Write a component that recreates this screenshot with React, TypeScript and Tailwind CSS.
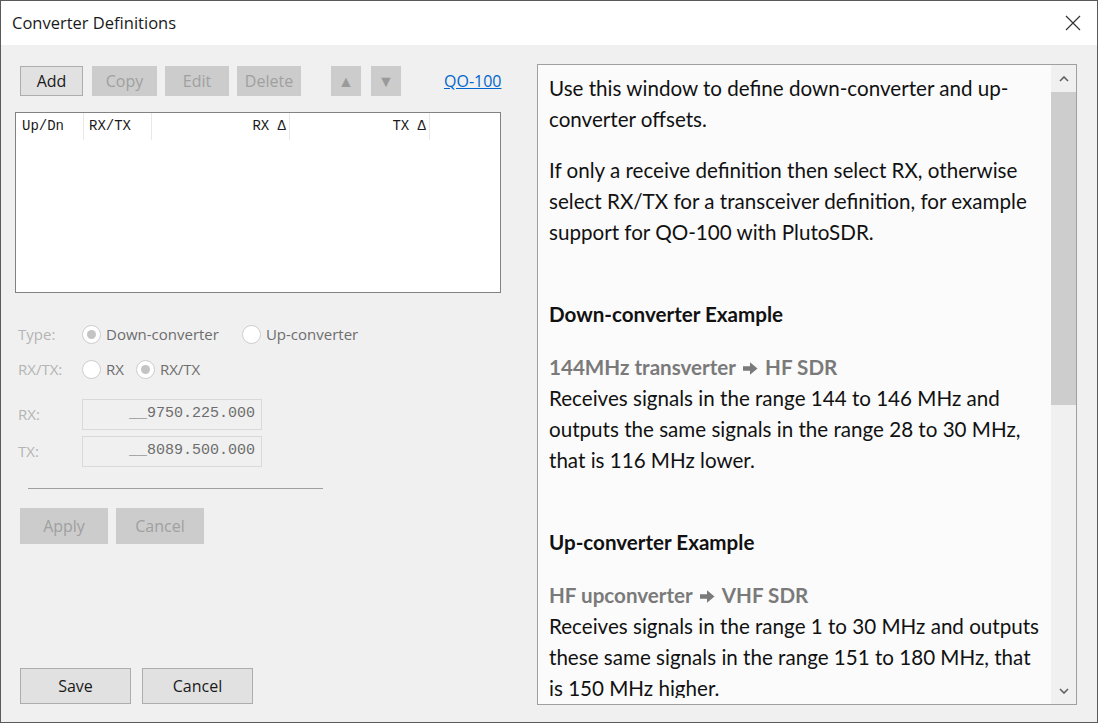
import React from 'react';

const ui = { fontFamily: '"Open Sans", "Noto Sans", sans-serif' };
const mono = { fontFamily: '"Liberation Mono", "DejaVu Sans Mono", monospace' };
const doc = { fontFamily: 'Lato, "Open Sans", sans-serif' };

function Btn({ label, w, disabled = false, h = 30 }: { label: string; w: number; disabled?: boolean; h?: number }) {
  return (
    <button
      className={
        disabled
          ? 'flex items-center justify-center bg-[#cccccc] text-[#a0a0a0] border border-[#cccccc] text-[16px]'
          : 'flex items-center justify-center bg-[#e1e1e1] text-[#1a1a1a] border border-[#adadad] text-[16px]'
      }
      style={{ width: w, height: h }}
    >
      {label}
    </button>
  );
}

function Radio({ checked, label }: { checked?: boolean; label: string }) {
  return (
    <div className="flex items-center">
      <span className="w-[19px] h-[19px] rounded-full border border-[#cdcdcd] bg-white flex items-center justify-center">
        {checked && <span className="w-[9px] h-[9px] rounded-full bg-[#c4c4c4]" />}
      </span>
      <span className="ml-[5px] text-[15px] text-[#6d6d6d]">{label}</span>
    </div>
  );
}

function Arrow() {
  return (
    <svg width="15" height="13" viewBox="0 0 15 13" className="inline-block mx-[7px] -mt-[3px]">
      <path d="M0 4.3h7V0.3L14.5 6.5L7 12.7V8.7H0z" fill="#7a7a7a" />
    </svg>
  );
}

export default function App() {
  return (
    <div className="w-[1098px] h-[723px] border border-[#5a5a5a] bg-[#f0f0f0] flex flex-col overflow-hidden" style={ui}>
      {/* title bar */}
      <div className="h-[44px] bg-white flex items-center justify-between pl-[11px] pr-[16px] shrink-0">
        <span className="text-[16.5px] text-[#1a1a1a]">Converter Definitions</span>
        <svg width="16" height="16" viewBox="0 0 16 16">
          <path d="M1 1L15 15M15 1L1 15" stroke="#333" strokeWidth="1.2" />
        </svg>
      </div>

      <div className="flex flex-1 min-h-0">
        {/* left column */}
        <div className="w-[536px] pl-[14px] pt-[21px] pb-[18px] flex flex-col">
          <div className="flex items-center ml-[5px] h-[30px]">
            <Btn label="Add" w={63} />
            <div className="w-[9px]" />
            <Btn label="Copy" w={65} disabled />
            <div className="w-[8px]" />
            <Btn label="Edit" w={64} disabled />
            <div className="w-[8px]" />
            <Btn label="Delete" w={64} disabled />
            <div className="w-[30px]" />
            <button className="w-[30px] h-[30px] bg-[#cccccc] text-[#9a9a9a] text-[16px] flex items-center justify-center">▲</button>
            <div className="w-[10px]" />
            <button className="w-[30px] h-[30px] bg-[#cccccc] text-[#9a9a9a] text-[16px] flex items-center justify-center">▼</button>
            <a className="ml-[43px] text-[16px] text-[#0066cc] underline">QO-100</a>
          </div>

          {/* list of converters */}
          <div className="mt-[16px] w-[486px] h-[181px] border border-[#828282] bg-white">
            <div className="flex h-[27px] text-[14px] text-[#1a1a1a]" style={mono}>
              <div className="w-[68px] border-r border-[#e8e8e8] pl-[6px] flex items-center">Up/Dn</div>
              <div className="w-[68px] border-r border-[#e8e8e8] pl-[5px] flex items-center">RX/TX</div>
              <div className="w-[138px] border-r border-[#e8e8e8] pr-[3px] flex items-center justify-end">RX Δ</div>
              <div className="w-[140px] border-r border-[#e8e8e8] pr-[3px] flex items-center justify-end">TX Δ</div>
            </div>
          </div>

          {/* editor */}
          <div className="ml-[3px] mt-[30px] flex flex-col">
            <div className="flex items-center h-[22px]">
              <span className="w-[64px] text-[15px] text-[#b4b4b4]">Type:</span>
              <Radio checked label="Down-converter" />
              <div className="w-[23px]" />
              <Radio label="Up-converter" />
            </div>
            <div className="flex items-center h-[22px] mt-[13px]">
              <span className="w-[64px] text-[15px] text-[#b4b4b4]">RX/TX:</span>
              <Radio label="RX" />
              <div className="w-[12px]" />
              <Radio checked label="RX/TX" />
            </div>
            <div className="flex items-center mt-[19px]">
              <span className="w-[64px] text-[15px] text-[#b4b4b4]">RX:</span>
              <div className="w-[180px] h-[31px] border border-[#d9d9d9] flex items-center justify-end pr-[6px] text-[15px] text-[#6d6d6d]" style={mono}>
                __9750.225.000
              </div>
            </div>
            <div className="flex items-center mt-[6px]">
              <span className="w-[64px] text-[15px] text-[#b4b4b4]">TX:</span>
              <div className="w-[180px] h-[31px] border border-[#d9d9d9] flex items-center justify-end pr-[6px] text-[15px] text-[#6d6d6d]" style={mono}>
                __8089.500.000
              </div>
            </div>
            <div className="ml-[10px] mt-[21px] w-[295px] h-px bg-[#a0a0a0]" />
            <div className="flex mt-[19px] ml-[2px] gap-[8px]">
              <Btn label="Apply" w={88} h={36} disabled />
              <Btn label="Cancel" w={88} h={36} disabled />
            </div>
          </div>

          <div className="mt-auto flex ml-[5px] gap-[11px]">
            <Btn label="Save" w={111} h={36} />
            <Btn label="Cancel" w={111} h={36} />
          </div>
        </div>

        {/* help pane */}
        <div className="mt-[19px] mb-[17px] w-[540px] min-h-0 border border-[#a0a0a0] bg-[#fbfbfc] flex overflow-hidden">
          <div className="flex-1 min-h-0 flex flex-col pb-[6px]">
            <div className="flex-1 min-h-0 overflow-hidden pl-[11px] pt-[8px] text-[20.6px] leading-[31px] text-[#111] whitespace-nowrap" style={doc}>
              <p className="mb-[20px]">
                Use this window to define down-converter and up-
                <br />
                converter offsets.
              </p>
              <p className="mb-[51px]">
                If only a receive definition then select RX, otherwise
                <br />
                select RX/TX for a transceiver definition, for example
                <br />
                support for QO-100 with PlutoSDR.
              </p>
              <p className="font-bold mb-[22px]">Down-converter Example</p>
              <p className="mb-[51px]">
                <span className="font-bold text-[#7a7a7a]">
                  144MHz transverter
                  <Arrow />
                  HF SDR
                </span>
                <br />
                Receives signals in the range 144 to 146 MHz and
                <br />
                outputs the same signals in the range 28 to 30 MHz,
                <br />
                that is 116 MHz lower.
              </p>
              <p className="font-bold mb-[22px]">Up-converter Example</p>
              <p>
                <span className="font-bold text-[#7a7a7a]">
                  HF upconverter
                  <Arrow />
                  VHF SDR
                </span>
                <br />
                Receives signals in the range 1 to 30 MHz and outputs
                <br />
                these same signals in the range 151 to 180 MHz, that
                <br />
                is 150 MHz higher.
              </p>
            </div>
          </div>
          {/* scrollbar */}
          <div className="w-[25px] bg-[#f0f0f0] flex flex-col items-center">
            <div className="h-[27px] w-full flex items-center justify-center">
              <svg width="10" height="6" viewBox="0 0 10 6">
                <path d="M1 5L5 1L9 5" stroke="#606060" strokeWidth="1.6" fill="none" />
              </svg>
            </div>
            <div className="w-full h-[313px] bg-[#cdcdcd]" />
            <div className="mt-auto h-[27px] w-full flex items-center justify-center">
              <svg width="10" height="6" viewBox="0 0 10 6">
                <path d="M1 1L5 5L9 1" stroke="#606060" strokeWidth="1.6" fill="none" />
              </svg>
            </div>
          </div>
        </div>
      </div>
    </div>
  );
}
